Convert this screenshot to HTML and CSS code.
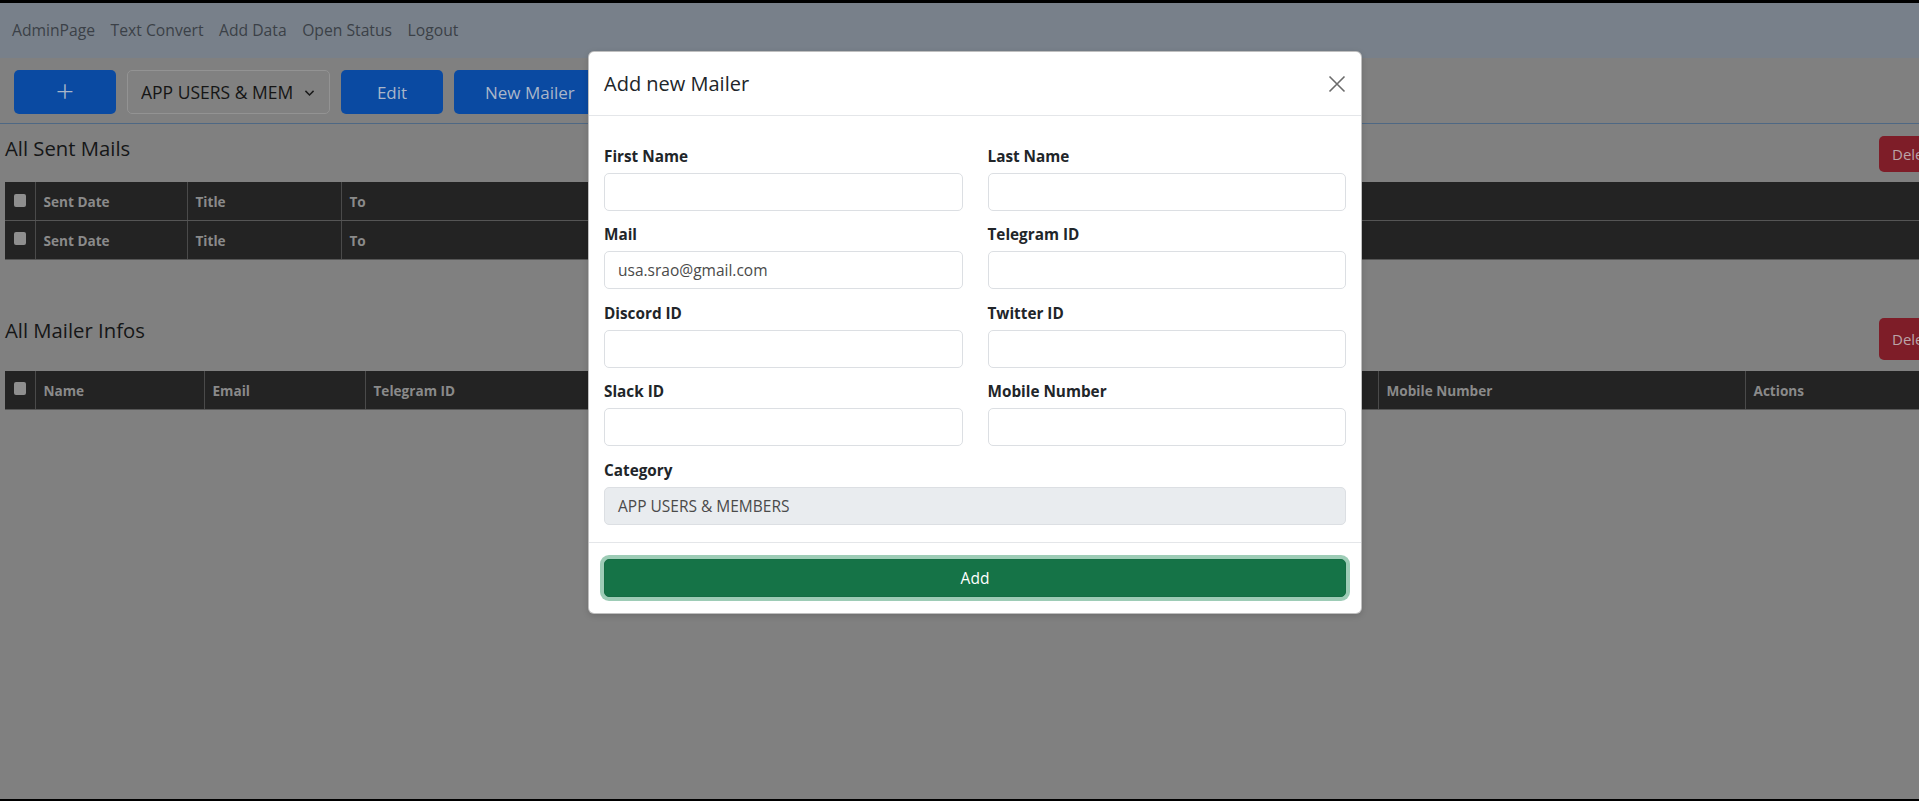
FILE: index.html
```html
<!DOCTYPE html>
<html lang="en">
<head>
<meta charset="utf-8">
<title>Mailer Admin</title>
<link rel="stylesheet" href="styles.css">
</head>
<body>
<div class="frame">
  <nav class="navbar">
    <a class="nav-link">AdminPage</a>
    <a class="nav-link">Text Convert</a>
    <a class="nav-link">Add Data</a>
    <a class="nav-link">Open Status</a>
    <a class="nav-link">Logout</a>
  </nav>

  <div class="toolbar">
    <button class="btn btn-primary btn-plus"><span class="plus">+</span></button>
    <div class="select"><span class="select-text">APP USERS &amp; MEMBERS</span>
      <svg class="chev" viewBox="0 0 16 16" width="13" height="13"><path d="M3 6l5 5 5-5" fill="none" stroke="#1a1a1a" stroke-width="1.8"/></svg>
    </div>
    <button class="btn btn-primary btn-edit">Edit</button>
    <button class="btn btn-primary btn-new">New Mailer</button>
  </div>

  <main class="content">
    <section class="block block-sent">
      <div class="block-head">
        <h5 class="block-title">All Sent Mails</h5>
        <button class="btn btn-danger btn-del">Delete</button>
      </div>
      <table class="dtable">
        <colgroup><col style="width:30px"><col style="width:152px"><col style="width:154px"><col></colgroup>
        <tr><th><span class="cb"></span></th><th>Sent Date</th><th>Title</th><th>To</th></tr>
        <tr><th><span class="cb"></span></th><th>Sent Date</th><th>Title</th><th>To</th></tr>
      </table>
    </section>

    <section class="block block-infos">
      <div class="block-head">
        <h5 class="block-title">All Mailer Infos</h5>
        <button class="btn btn-danger btn-del btn-del-lg">Delete</button>
      </div>
      <table class="dtable">
        <colgroup><col style="width:30px"><col style="width:169px"><col style="width:161px"><col style="width:253px"><col style="width:253px"><col style="width:253px"><col style="width:254px"><col style="width:367px"><col></colgroup>
        <tr><th><span class="cb"></span></th><th>Name</th><th>Email</th><th>Telegram ID</th><th>Discord ID</th><th>Twitter ID</th><th>Slack ID</th><th>Mobile Number</th><th>Actions</th></tr>
      </table>
    </section>
  </main>

  <div class="modal">
    <div class="modal-header">
      <h5 class="modal-title">Add new Mailer</h5>
      <svg class="close" viewBox="0 0 18 18" width="18" height="18"><path d="M1.5 1.5l15 15M16.5 1.5l-15 15" stroke="#6b6b6b" stroke-width="1.6" fill="none"/></svg>
    </div>
    <div class="modal-body">
      <div class="field"><label>First Name</label><div class="input"></div></div>
      <div class="field"><label>Last Name</label><div class="input"></div></div>
      <div class="field"><label>Mail</label><div class="input">usa.srao@gmail.com</div></div>
      <div class="field"><label>Telegram ID</label><div class="input"></div></div>
      <div class="field"><label>Discord ID</label><div class="input"></div></div>
      <div class="field"><label>Twitter ID</label><div class="input"></div></div>
      <div class="field"><label>Slack ID</label><div class="input"></div></div>
      <div class="field"><label>Mobile Number</label><div class="input"></div></div>
      <div class="field field-full"><label>Category</label><div class="input input-disabled">APP USERS &amp; MEMBERS</div></div>
    </div>
    <div class="modal-footer">
      <button class="btn-add">Add</button>
    </div>
  </div>
</div>
</body>
</html>
```
FILE: styles.css
```css
* { box-sizing: border-box; }
html, body { margin: 0; padding: 0; }
body {
  width: 1919px;
  height: 801px;
  overflow: hidden;
  background: #000;
  font-family: "Open Sans", "Noto Sans", sans-serif;
}
.frame {
  position: relative;
  height: 801px;
  border-top: 3px solid #000;
  border-bottom: 2px solid #000;
  background: #808080;
  overflow: hidden;
}
.navbar {
  height: 55px;
  background: #78808a;
  display: flex;
  align-items: center;
  padding-left: 12px;
  gap: 15.5px;
}
.nav-link {
  font-size: 15.7px;
  color: #3b4047;
  padding-bottom: 1px;
}
.toolbar {
  display: flex;
  align-items: center;
  padding: 12px 0 9px 14px;
  border-bottom: 1px solid #4e6884;
  width: 1919px;
}
.btn {
  border: 0;
  font-family: inherit;
  border-radius: 5px;
  cursor: pointer;
  padding: 0;
}
.btn-primary {
  background: #0a4aa2;
  color: #a9b6c9;
  height: 44px;
  font-size: 17px;
}
.btn-plus { width: 102px; margin-right: 11px; }
.plus { font-size: 32px; font-weight: 300; line-height: 1; color: #a9b6c9; position: relative; top: -1px; }
.select {
  width: 203px;
  height: 44px;
  border: 1px solid #939393;
  border-radius: 5px;
  background: #818181;
  display: flex;
  align-items: center;
  padding: 0 13px 0 13px;
  margin-right: 11px;
}
.select-text {
  flex: 1;
  overflow: hidden;
  white-space: nowrap;
  font-size: 17.5px;
  color: #151515;
  text-overflow: clip;
}
.chev { margin-left: 11px; flex: none; }
.btn-edit { width: 102px; margin-right: 11px; }
.btn-new { width: 150px; padding-left: 31px; text-align: left; }

.content {
  width: 1952px;
  padding-left: 5px;
}
.block-head {
  display: flex;
  justify-content: space-between;
  align-items: flex-start;
}
.block-sent .block-head { padding-top: 12px; margin-bottom: 10px; }
.block-infos .block-head { padding-top: 58px; margin-bottom: 11px; }
.block-title {
  margin: -1px 0 0;
  font-size: 20.3px;
  font-weight: 400;
  line-height: 26px;
  color: #151617;
}
.btn-danger {
  background: #7e1d28;
  color: #bba4a7;
  font-size: 15px;
  height: 36px;
  width: 73px;
  padding-left: 13px;
  text-align: left;
}
.btn-del-lg { height: 42px; }

.dtable {
  width: 1947px;
  table-layout: fixed;
  border-collapse: collapse;
  background: #232323;
}
.dtable th {
  height: 38.5px;
  text-align: left;
  font-size: 13.6px;
  font-weight: 700;
  color: #8a8a8a;
  padding: 1px 8px 0;
  border-left: 1px solid #4a4a4a;
  border-bottom: 1px solid #555;
  white-space: nowrap;
  overflow: hidden;
}
.dtable th:first-child { border-left: 0; padding: 0 0 0 9px; }
.cb {
  display: block;
  width: 12px;
  height: 13px;
  background: #8e8e8e;
  border-radius: 2px;
  margin-top: -2px;
}

.modal {
  position: absolute;
  left: 588px;
  top: 48px;
  width: 774px;
  background: #fff;
  border: 1px solid rgba(0,0,0,.25);
  border-radius: 6px;
  box-shadow: 0 2px 6px rgba(0,0,0,.15);
}
.modal-header {
  height: 64px;
  display: flex;
  align-items: center;
  justify-content: space-between;
  padding: 0 15px 0 15px;
  border-bottom: 1px solid #e4e6e9;
}
.modal-title {
  margin: 0;
  font-size: 20px;
  font-weight: 400;
  color: #212529;
}
.close { margin-right: 0; }
.modal-body {
  display: grid;
  grid-template-columns: 1fr 1fr;
  column-gap: 25px;
  row-gap: 12.5px;
  padding: 28.5px 15px 17.5px 15px;
}
.field-full { grid-column: 1 / span 2; }
.field label {
  display: block;
  font-size: 15.3px;
  font-weight: 700;
  line-height: 23px;
  color: #212529;
  margin-bottom: 5px;
}
.input {
  height: 38px;
  border: 1px solid #dcdfe3;
  border-radius: 5px;
  padding: 0 13px;
  font-size: 15.5px;
  line-height: 36px;
  color: #4a4a4a;
}
.input-disabled { background: #e9ecef; }
.modal-footer {
  border-top: 1px solid #e4e6e9;
  padding: 16px 15px 16px 15px;
}
.btn-add {
  display: block;
  width: 100%;
  height: 38px;
  border: 1px solid #146c43;
  border-radius: 5px;
  background: #157347;
  color: #fff;
  font-family: inherit;
  font-size: 15.5px;
  box-shadow: 0 0 0 4px rgba(60,153,110,.5);
}
```
